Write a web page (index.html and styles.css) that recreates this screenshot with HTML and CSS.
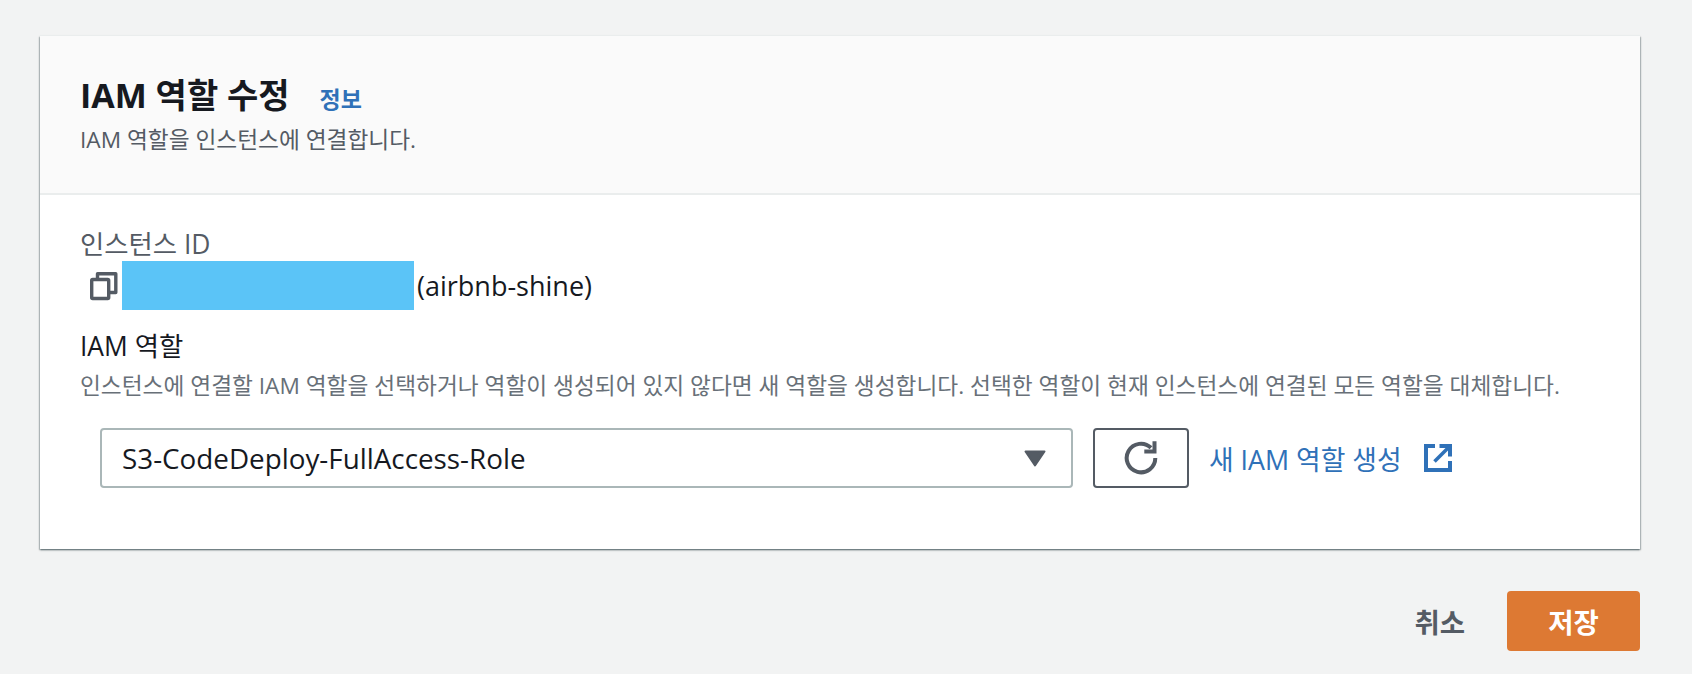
FILE: index.html
```html
<!DOCTYPE html>
<html lang="ko">
  <head>
    <meta charset="UTF-8">
    <meta name="viewport" content="width=device-width, initial-scale=1.0">
    <title>IAM 역할 수정</title>
    <link rel="stylesheet" href="styles.css">
  </head>
  <body>
    <div class="card">
      <div class="card-header">
        <div class="title-row">
          <h1 class="title">IAM 역할 수정</h1>
          <a class="info-link" href="#">정보</a>
        </div>
        <p class="subtitle">IAM 역할을 인스턴스에 연결합니다.</p>
      </div>
      <div class="card-body">
        <div class="field-label muted">인스턴스 ID</div>
        <div class="instance-row">
          <svg class="copy-icon" viewBox="0 0 30 30" width="30" height="30" fill="none" stroke="#545b64" stroke-width="3.4" stroke-linejoin="round">
            <path d="M8.500 7V2.700H26.800V21.500H20"/>
            <rect x="2.700" y="8.500" width="17" height="19" rx="1"/>
          </svg>
          <span class="redacted"></span>
          <span class="instance-name">(airbnb-shine)</span>
        </div>
        <div class="field-label role-label">IAM 역할</div>
        <div class="hint">인스턴스에 연결할 IAM 역할을 선택하거나 역할이 생성되어 있지 않다면 새 역할을 생성합니다. 선택한 역할이 현재 인스턴스에 연결된 모든 역할을 대체합니다.</div>
        <div class="role-row">
          <div class="select">
            <span>S3-CodeDeploy-FullAccess-Role</span>
            <svg class="caret" viewBox="0 0 22 17" width="22" height="17" fill="#545b64" stroke="#545b64" stroke-width="2" stroke-linejoin="round">
              <path d="M1.500 1.500H20.500L11 15.500Z"/>
            </svg>
          </div>
          <button class="refresh-btn">
            <svg viewBox="0 0 36 36" width="36" height="36" fill="none" stroke="#545b64" stroke-width="4">
              <path d="M32.300 18A14.300 14.300 0 1 1 28 7.800"/>
              <path d="M31.500 1.200V11.500H21.300"/>
            </svg>
          </button>
          <a class="create-link" href="#">새 IAM 역할 생성</a>
          <svg class="external-icon" viewBox="0 0 28 28" width="28" height="28" fill="none" stroke="#2f71b8" stroke-width="4">
            <path d="M11 2H2V26H26V17"/>
            <path d="M15.500 2H26V12.500"/>
            <path d="M25 3L10.500 17.500" stroke-width="3.6"/>
          </svg>
        </div>
      </div>
    </div>
    <div class="actions">
      <button class="cancel-btn">취소</button>
      <button class="save-btn">저장</button>
    </div>
  </body>
</html>
```

FILE: styles.css
```css
* {
  box-sizing: border-box;
}

body {
  margin: 0;
  padding: 36px 52px 0 40px;
  height: 674px;
  overflow: hidden;
  background-color: #f2f3f3;
  font-family: "Open Sans", "Noto Sans CJK KR", sans-serif;
  color: #16191f;
}

.card {
  height: 513px;
  background-color: #fff;
  box-shadow: 0 -1px 0 0 #eaeded, 0 1px 2px 0 rgba(0, 28, 36, 0.5), 1px 1px 1px 0 rgba(0, 28, 36, 0.15), -1px 1px 1px 0 rgba(0, 28, 36, 0.15);
}

.card-header {
  height: 159px;
  padding: 38px 40px 0;
  background-color: #fafafa;
  border-bottom: 2px solid #eaeded;
}

.title-row {
  display: flex;
  align-items: baseline;
  gap: 30px;
}

.title {
  margin: 0;
  font-size: 34px;
  line-height: 42px;
  font-weight: 700;
}

.info-link {
  font-size: 23px;
  font-weight: 700;
  color: #2f71b8;
  text-decoration: none;
}

.subtitle {
  margin: 11px 0 0;
  font-size: 22.7px;
  line-height: 26px;
  color: #545b64;
}

.card-body {
  padding: 33px 40px 0;
}

.field-label {
  font-size: 26.4px;
  line-height: 32px;
}

.muted {
  color: #545b64;
}

.instance-row {
  display: flex;
  align-items: center;
  height: 49px;
  margin-top: 1px;
  padding-left: 9px;
}

.copy-icon {
  flex: none;
}

.redacted {
  width: 292px;
  height: 49px;
  margin-left: 3px;
  background-color: #5bc4f7;
}

.instance-name {
  margin-left: 3px;
  font-size: 27px;
}

.role-label {
  margin-top: 20px;
}

.hint {
  margin-top: 11px;
  font-size: 22.7px;
  line-height: 26px;
  color: #687078;
  white-space: nowrap;
}

.role-row {
  display: flex;
  align-items: center;
  margin-top: 29px;
  padding-left: 20px;
}

.select {
  display: flex;
  align-items: center;
  justify-content: space-between;
  width: 973px;
  height: 60px;
  padding: 0 25px 0 20px;
  border: 2px solid #aab7b8;
  border-radius: 4px;
  font-size: 27.8px;
}

.caret {
  flex: none;
}

.refresh-btn {
  display: flex;
  align-items: center;
  justify-content: center;
  width: 96px;
  height: 60px;
  margin-left: 20px;
  padding: 0;
  background-color: #fff;
  border: 2px solid #545b64;
  border-radius: 4px;
}

.create-link {
  margin-left: 20px;
  font-size: 26.8px;
  color: #2f71b8;
  text-decoration: none;
}

.external-icon {
  margin-left: 22px;
}

.actions {
  display: flex;
  justify-content: flex-end;
  align-items: center;
  gap: 42px;
  margin-top: 42px;
}

.cancel-btn,
.save-btn {
  padding: 0;
  border: none;
  font-family: inherit;
  font-size: 27.5px;
  font-weight: 700;
}

.cancel-btn {
  background: none;
  color: #545b64;
}

.save-btn {
  width: 133px;
  height: 60px;
  background-color: #dd7933;
  border-radius: 4px;
  color: #fff;
}
```
